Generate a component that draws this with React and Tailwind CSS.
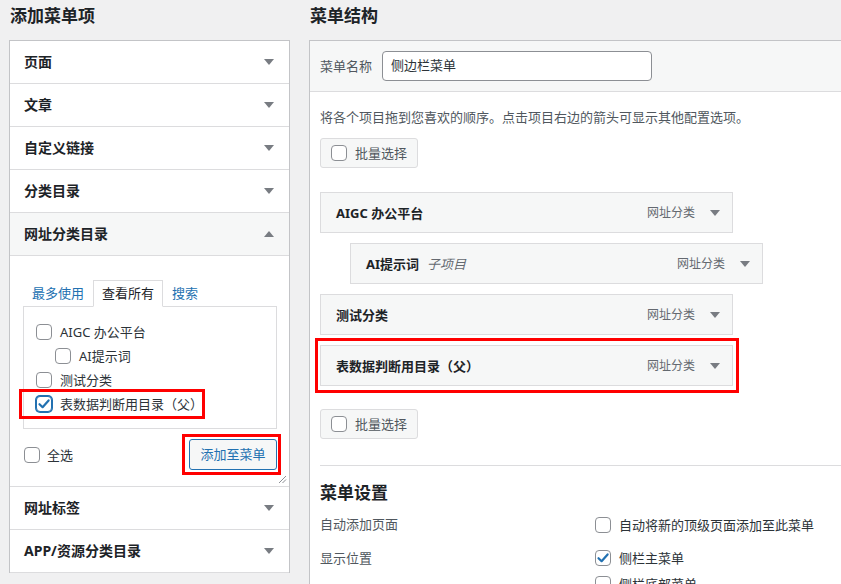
const font = { fontFamily: '"Noto Sans", "Noto Sans CJK SC", sans-serif' };

function Arrow({ up = false }) {
  return (
    <svg width="10" height="6" viewBox="0 0 10 6" className="shrink-0">
      {up ? <path d="M5 0 L10 6 L0 6 Z" fill="#787c82" /> : <path d="M0 0 L10 0 L5 6 Z" fill="#787c82" />}
    </svg>
  );
}

function Check({ checked = false, blue = false }) {
  return (
    <span
      className={`flex h-4 w-4 shrink-0 items-center justify-center rounded-[4px] border bg-white ${
        blue ? 'border-[#2271b1] shadow-[0_0_0_1px_#2271b1]' : 'border-[#8c8f94]'
      }`}
    >
      {checked && (
        <svg width="14" height="14" viewBox="0 0 14 14">
          <path d="M2.5 7.2 L5.6 10.2 L11.6 3.4" fill="none" stroke="#2271b1" strokeWidth="2.2" strokeLinecap="round" strokeLinejoin="round" />
        </svg>
      )}
    </span>
  );
}

function AccRow({ title, up = false, active = false }) {
  return (
    <div
      className={`flex h-[43px] items-center justify-between border-b border-[#dcdcde] pl-[14px] pr-[15px] ${
        active ? 'bg-[#f6f7f7]' : 'bg-white'
      }`}
    >
      <span className="text-[14px] font-bold leading-5 text-[#1d2327]">{title}</span>
      <Arrow up={up} />
    </div>
  );
}

function MenuItem({ title, sub, indent = false, marked = false }) {
  const box = (
    <div
      className={`flex h-[41px] w-[413px] items-center justify-between border border-[#dcdcde] bg-[#f6f7f7] pl-[15px] pr-[12px] ${
        indent ? 'ml-[30px]' : ''
      }`}
    >
      <span className="flex items-baseline gap-[8px]">
        <span className="text-[13px] font-bold leading-5 text-[#1d2327]">{title}</span>
        {sub && <span className="text-[13px] italic leading-5 text-[#646970]">{sub}</span>}
      </span>
      <span className="flex items-center gap-[15px]">
        <span className="text-[12px] leading-5 text-[#646970]">网址分类</span>
        <Arrow />
      </span>
    </div>
  );
  if (!marked) return box;
  return (
    <div className="relative">
      {box}
      <div className="pointer-events-none absolute -left-[5px] -top-[7px] h-[55px] w-[424px] border-[3px] border-[#ff0000]" />
    </div>
  );
}

function BulkButton() {
  return (
    <div className="flex h-[30px] w-[98px] items-center gap-[8px] rounded-[3px] border border-[#dcdcde] bg-[#f6f7f7] pl-[10px]">
      <Check />
      <span className="text-[13px] leading-5 text-[#50575e]">批量选择</span>
    </div>
  );
}

export default function App() {
  return (
    <div className="h-[584px] w-[841px] overflow-hidden bg-[#f0f0f1] text-[#1d2327]" style={font}>
      <div className="flex gap-[19px] pl-[9px]">
        {/* left column */}
        <div className="w-[281px] shrink-0">
          <h2 className="pt-[4px] pl-[1px] text-[17px] font-bold leading-[24px]">添加菜单项</h2>
          <div className="mt-[12px] border border-b-0 border-[#c3c4c7] bg-white">
            <AccRow title="页面" />
            <AccRow title="文章" />
            <AccRow title="自定义链接" />
            <AccRow title="分类目录" />
            <AccRow title="网址分类目录" up active />
            <div className="relative h-[231px] border-b border-[#dcdcde] px-[13px] pt-[24px]">
              <div className="flex text-[13px] leading-[24px]">
                <span className="border border-transparent px-[8px] text-[#2271b1]">最多使用</span>
                <span className="relative z-10 -mb-px border border-b-white border-[#dcdcde] bg-white px-[8px] text-[#1d2327]">查看所有</span>
                <span className="border border-transparent px-[8px] text-[#2271b1]">搜索</span>
              </div>
              <div className="h-[123px] w-[254px] border border-[#dcdcde] bg-white pl-[12px] pt-[17px]">
                <div className="flex flex-col gap-[8px] text-[13px] leading-4 text-[#2c3338]">
                  <label className="flex items-center gap-[8px]">
                    <Check />
                    <span>AIGC 办公平台</span>
                  </label>
                  <label className="ml-[19px] flex items-center gap-[8px]">
                    <Check />
                    <span>AI提示词</span>
                  </label>
                  <label className="flex items-center gap-[8px]">
                    <Check />
                    <span>测试分类</span>
                  </label>
                  <label className="relative flex items-center gap-[8px]">
                    <Check checked blue />
                    <span>表数据判断用目录（父）</span>
                    <span className="pointer-events-none absolute -left-[17px] -top-[7px] h-[30px] w-[186px] border-[3px] border-[#ff0000]" />
                  </label>
                </div>
              </div>
              <div className="mt-[10px] flex w-[254px] items-center justify-between">
                <label className="flex items-center gap-[7px] pl-[1px] text-[13px] leading-5 text-[#2c3338]">
                  <Check />
                  <span>全选</span>
                </label>
                <div className="relative">
                  <div className="flex h-[31px] w-[88px] items-center justify-center rounded-[3px] border border-[#2271b1] bg-[#f6f7f7] text-[13px] text-[#2271b1]">
                    添加至菜单
                  </div>
                  <span className="pointer-events-none absolute -left-[7px] -top-[5px] h-[41px] w-[99px] border-[3px] border-[#ff0000]" />
                </div>
              </div>
              <svg className="absolute bottom-[2px] right-[2px]" width="9" height="9" viewBox="0 0 9 9">
                <path d="M1 8 L8 1 M4.5 8 L8 4.5" stroke="#8c8f94" strokeWidth="1" />
              </svg>
            </div>
            <AccRow title="网址标签" />
            <AccRow title="APP/资源分类目录" />
          </div>
        </div>

        {/* right column */}
        <div className="w-[560px] shrink-0">
          <h2 className="pt-[4px] pl-[1px] text-[17px] font-bold leading-[24px]">菜单结构</h2>
          <div className="mt-[12px] border border-[#c3c4c7] bg-white">
            <div className="flex h-[51px] items-center gap-[10px] border-b border-[#dcdcde] bg-[#f6f7f7] pl-[10px]">
              <span className="text-[13px] leading-5 text-[#50575e]">菜单名称</span>
              <div className="flex h-[30px] w-[270px] items-center rounded-[4px] border border-[#8c8f94] bg-white pl-[8px] text-[13px] text-[#2c3338]">
                侧边栏菜单
              </div>
            </div>
            <div className="px-[10px] pt-[15px]">
              <p className="text-[13px] leading-5 text-[#50575e]">
                将各个项目拖到您喜欢的顺序。点击项目右边的箭头可显示其他配置选项。
              </p>
              <div className="mt-[11px]">
                <BulkButton />
              </div>
              <div className="mt-[24px] flex flex-col gap-[10px]">
                <MenuItem title="AIGC 办公平台" />
                <MenuItem title="AI提示词" sub="子项目" indent />
                <MenuItem title="测试分类" />
                <MenuItem title="表数据判断用目录（父）" marked />
              </div>
              <div className="mt-[23px]">
                <BulkButton />
              </div>
              <div className="mt-[26px] border-t border-[#dcdcde] pt-[15px]">
                <h3 className="text-[17px] font-bold leading-[24px]">菜单设置</h3>
                <div className="mt-[9px] grid grid-cols-[275px_1fr] text-[13px] leading-5 text-[#50575e]">
                  <span>自动添加页面</span>
                  <label className="flex items-center gap-[8px] pt-[1px]">
                    <Check />
                    <span className="text-[#2c3338]">自动将新的顶级页面添加至此菜单</span>
                  </label>
                  <span className="mt-[13px]">显示位置</span>
                  <div className="mt-[13px] flex flex-col gap-[6px] text-[#2c3338]">
                    <label className="flex items-center gap-[8px]">
                      <Check checked />
                      <span>侧栏主菜单</span>
                    </label>
                    <label className="flex items-center gap-[8px]">
                      <Check />
                      <span>侧栏底部菜单</span>
                    </label>
                  </div>
                </div>
              </div>
            </div>
          </div>
        </div>
      </div>
    </div>
  );
}
